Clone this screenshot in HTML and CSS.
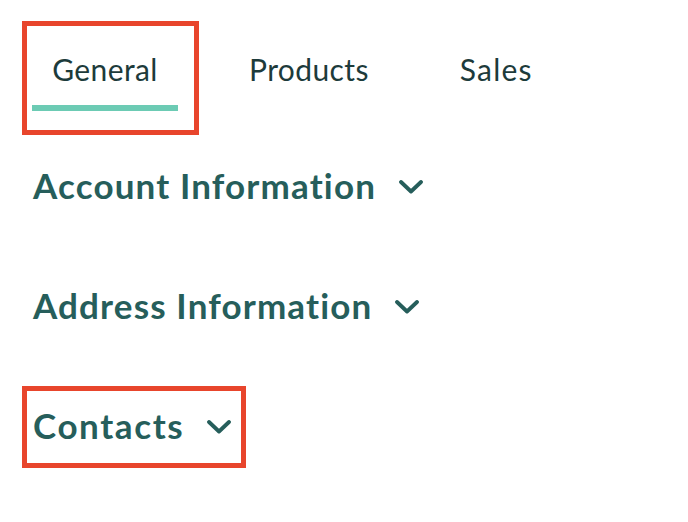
FILE: index.html
```html
<!DOCTYPE html>
<html>
<head>
<meta charset="utf-8">
<link rel="stylesheet" href="styles.css">
</head>
<body>
<nav class="tabs">
  <div class="tab tab-active highlight">
    <span class="tab-label">General</span>
    <span class="tab-bar"></span>
  </div>
  <div class="tab tab-products"><span class="tab-label">Products</span></div>
  <div class="tab tab-sales"><span class="tab-label">Sales</span></div>
</nav>
<section class="sections">
  <div class="section-row">
    <h2 class="section-title">Account Information</h2>
    <svg class="chev" viewBox="0 0 24 14" width="24" height="14"><path d="M2 2 L12 11.5 L22 2" fill="none" stroke="currentColor" stroke-width="3.8" stroke-linecap="round" stroke-linejoin="round"/></svg>
  </div>
  <div class="section-row">
    <h2 class="section-title">Address Information</h2>
    <svg class="chev" viewBox="0 0 24 14" width="24" height="14"><path d="M2 2 L12 11.5 L22 2" fill="none" stroke="currentColor" stroke-width="3.8" stroke-linecap="round" stroke-linejoin="round"/></svg>
  </div>
  <div class="section-row highlight">
    <h2 class="section-title title-contacts">Contacts</h2>
    <svg class="chev" viewBox="0 0 24 14" width="24" height="14"><path d="M2 2 L12 11.5 L22 2" fill="none" stroke="currentColor" stroke-width="3.8" stroke-linecap="round" stroke-linejoin="round"/></svg>
  </div>
</section>
</body>
</html>
```
FILE: styles.css
```css
html, body {
  margin: 0;
  padding: 0;
  background: #ffffff;
}
body {
  width: 688px;
  height: 522px;
  font-family: Lato, "Noto Sans", sans-serif;
  overflow: hidden;
}
.tabs {
  display: flex;
  align-items: flex-start;
  padding: 21px 0 0 22px;
}
.tab {
  display: flex;
  flex-direction: column;
  align-items: center;
  box-sizing: border-box;
  height: 114px;
}
.tab-label {
  display: block;
  font-size: 30px;
  line-height: 30px;
  color: #1d3b3b;
  letter-spacing: 0.4px;
  margin-top: 33px;
}
.tab-active {
  padding: 0 16px 0 5px;
}
.tab-active .tab-label {
  margin-top: 28px;
}
.tab-bar {
  display: block;
  width: 146px;
  height: 6px;
  background: #6ccbb4;
  margin-top: 21px;
}
.tab-products {
  margin-left: 50px;
}
.tab-sales {
  margin-left: 91px;
}
.tab-sales .tab-label {
  letter-spacing: 1.2px;
}
.highlight {
  border: 5px solid #e8452c;
}
.sections {
  display: flex;
  flex-direction: column;
  align-items: flex-start;
  padding: 11px 0 0 22px;
}
.section-row {
  display: flex;
  align-items: center;
  gap: 23px;
  box-sizing: border-box;
  height: 82px;
  padding: 14px 11px 18px 6px;
  border: 5px solid transparent;
  color: #265e5b;
}
.section-row.highlight {
  border-color: #e8452c;
  padding-right: 10px;
}
.section-row + .section-row {
  margin-top: 38px;
}
.section-title {
  margin: 0;
  font-size: 35px;
  line-height: 40px;
  font-weight: 700;
  color: #265e5b;
  letter-spacing: 1.15px;
}
.title-contacts {
  letter-spacing: 1.6px;
}
.chev {
  display: block;
  margin-top: 3px;
}
```
